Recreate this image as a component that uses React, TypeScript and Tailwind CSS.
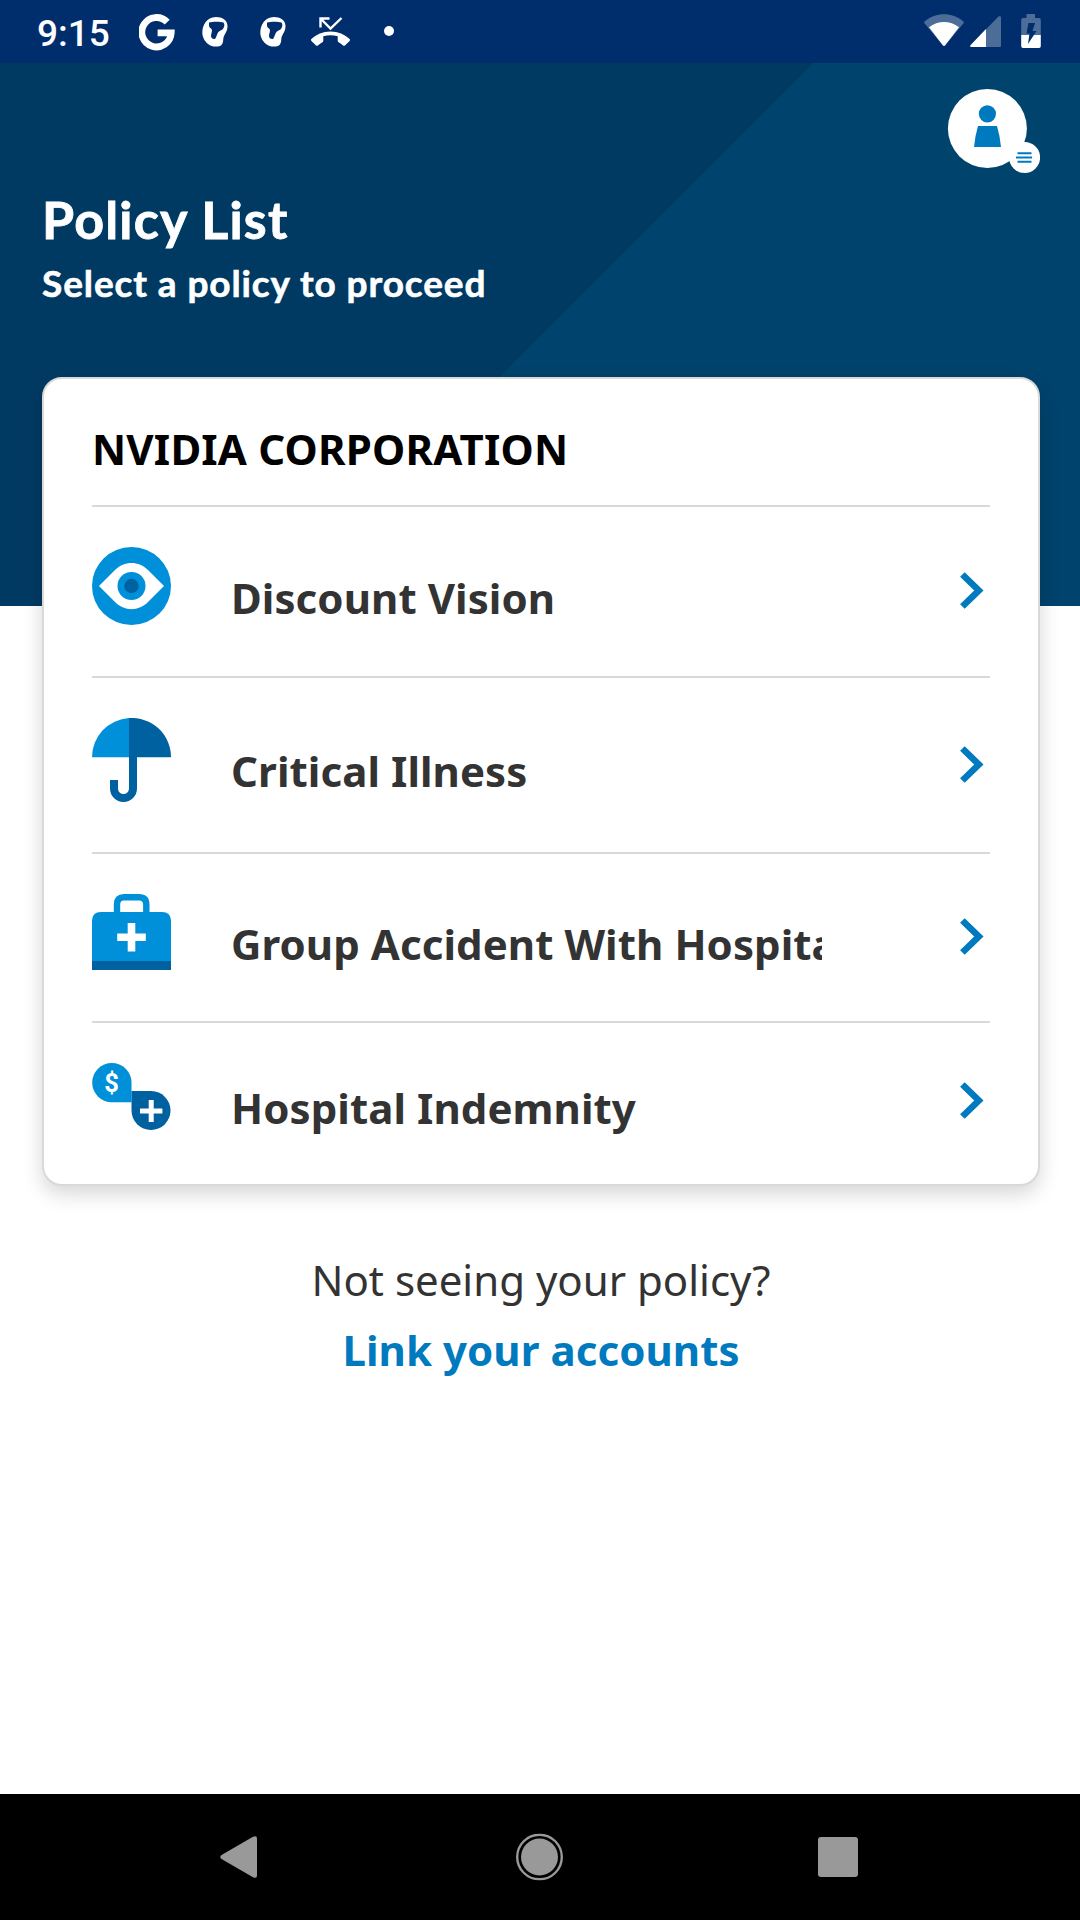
import React from "react";

const HeadGlyph = () => (
  <svg className="h-[30px] w-[26px]" viewBox="0 0 26 30">
    <path
      d="M14 0C20 0 25.500 3 25.500 9C25.500 14.500 22.500 17 21.500 20.500C21 23 21.500 26 19.500 28C17.500 30 12.500 30 9 28.700C5 27 1.500 23 .5 18C-.5 11 3 0 14 0Z"
      fill="#fff"
    />
    <path
      d="M7 5.500C11 4.500 18 4.500 21.500 5.500C23 7 22.500 10.500 20.500 12.500C18.500 13.500 16.500 14 15.500 16.500C14.500 18.500 14.500 20 13 22C11 22.500 9 21 9 19C9 16.500 10.500 14.500 9.800 12.500C9 11 7.500 11 7 9Z"
      fill="#002e6d"
    />
  </svg>
);

const StatusBar = () => (
  <div className="flex h-[63px] items-start bg-[#002e6d] pl-[37px] text-white">
    <span className="mt-[12px] w-[102px] font-[Roboto] text-[37px] leading-[43px] font-medium">9:15</span>
    <svg className="mt-[13.500px] h-[37px] w-[36px]" viewBox="0 0 36 37">
      <path
        d="M28.200 8.100A14.700 14.700 0 1 0 32.200 18.900H18.600"
        fill="none"
        stroke="#fff"
        strokeWidth="6.8"
      />
    </svg>
    <div className="mt-[17px] ml-[27px] flex gap-[32px]">
      <HeadGlyph />
      <HeadGlyph />
    </div>
    <svg className="mt-[17px] ml-[25px] h-[30px] w-[39px]" viewBox="0 0 39 30">
      <path d="M9.500 10.500V1.500H18.500M9.500 1.500L19.500 11.500L30.500 1" fill="none" stroke="#fff" strokeWidth="2.400" />
      <path
        d="M19.500 14.500C27 14.500 34 17.500 38.600 22C39.200 22.700 39.200 23.300 38.600 24L34.200 28.300C33.500 29 32.800 29 32.100 28.400C30.700 27.100 29.200 26 27.600 25.200C27 24.900 26.700 24.500 26.700 23.800V19.300C22 17.800 17 17.800 12.300 19.300V23.800C12.300 24.500 12 24.900 11.400 25.200C9.800 26 8.300 27.100 6.900 28.400C6.200 29 5.500 29 4.800 28.300L.4 24C-.2 23.300-.2 22.700 .4 22C5 17.500 12 14.500 19.500 14.500Z"
        fill="#fff"
      />
    </svg>
    <span className="mt-[26px] ml-[34px] size-[10px] rounded-full bg-white" />
    <svg className="mt-[14px] mr-[6px] ml-auto h-[33px] w-[40px]" viewBox="0 0 40 33">
      <path d="M.6 7.400C12 -2 28 -2 39.400 7.400C40 8 40 8.600 39.500 9.300L21.200 31.300C20.500 32.100 19.500 32.100 18.800 31.300L.5 9.300C0 8.600 0 8 .6 7.400Z" fill="#fff" fillOpacity=".3" />
      <path d="M5 13.300C14 6.300 26 6.300 35 13.300L21.200 31.300C20.500 32.100 19.500 32.100 18.800 31.300Z" fill="#fff" />
    </svg>
    <svg className="mt-[16px] h-[31px] w-[31px]" viewBox="0 0 31 31">
      <path d="M31 1.500V29.500Q31 31 29.500 31H1.500Q-.7 31 .7 29L28.500.6Q31-.6 31 1.500Z" fill="#fff" fillOpacity=".3" />
      <path d="M16 13V31H1.500Q-.7 31 .7 29Z" fill="#fff" />
    </svg>
    <svg className="mt-[14px] mr-[39px] ml-[20px] h-[34px] w-[20px]" viewBox="0 0 20 34">
      <path d="M5.500 0H14V4H18Q19.800 4 19.800 6V21H.2V6Q.2 4 2 4H5.500Z" fill="#fff" fillOpacity=".3" />
      <path d="M.2 21H19.800V32Q19.800 34 18 34H2Q.2 34 .2 32Z" fill="#fff" />
      <path d="M7.500 9H14L11.500 17H15.500L7 30L8.500 19.500H5.500Z" fill="#002e6d" />
    </svg>
  </div>
);

const Avatar = () => (
  <svg className="mt-[25px] mr-[40px] ml-auto block h-[86px] w-[93px]" viewBox="0 0 93 86">
    <circle cx="40.400" cy="40.500" r="39.500" fill="#fff" />
    <circle cx="40.400" cy="25.800" r="8.600" fill="#007abf" />
    <path d="M31 38H50Q53 48 54 59H27Q28 48 31 38Z" fill="#007abf" />
    <circle cx="77.600" cy="69.500" r="15.500" fill="#fff" />
    <path d="M70.500 65.200H84.500M69 69.500H85M70.500 73.800H84.500" stroke="#007abf" strokeWidth="2" />
  </svg>
);

const EyeIcon = () => (
  <svg className="h-[78px] w-[79px]" viewBox="0 0 79 78">
    <ellipse cx="39.500" cy="39" rx="39.500" ry="39" fill="#0090da" />
    <path d="M7 39L23 23C32 13.500 47 13.500 56 23L72 39L56 55C47 64.500 32 64.500 23 55Z" fill="#fff" />
    <circle cx="39.500" cy="39" r="14" fill="#0090da" />
    <circle cx="39.500" cy="39" r="7.200" fill="#0061a0" />
  </svg>
);

const UmbrellaIcon = () => (
  <svg className="mb-[-1px] h-[84px] w-[79px]" viewBox="0 0 79 84">
    <path d="M37 0V39.300H0A39.400 39.400 0 0 1 37 0Z" fill="#0090da" />
    <path d="M37 0C61 -1 79 17 79 39.300H37Z" fill="#0061a0" />
    <path d="M41 38V70.500A9.300 9.300 0 0 1 22 70.500V62" fill="none" stroke="#0061a0" strokeWidth="8" />
  </svg>
);

const BriefcaseIcon = () => (
  <svg className="h-[76px] w-[79px]" viewBox="0 0 79 76">
    <path d="M25 22V10.500Q25 3.200 32 3.200H47Q54.300 3.200 54.300 10.500V22" fill="none" stroke="#0090da" strokeWidth="6.400" />
    <path d="M0 67V27Q0 18 9 18H70Q79 18 79 27V67Z" fill="#0090da" />
    <path d="M0 67H79V76H0Z" fill="#0061a0" />
    <path d="M39.500 29V57.500M25.200 43.200H53.800" stroke="#fff" strokeWidth="7.600" />
  </svg>
);

const IndemnityIcon = () => (
  <svg className="mb-[-1px] h-[67px] w-[79px]" viewBox="0 0 79 67">
    <path d="M39.500 39.300H19.700A19.650 19.650 0 1 1 39.500 19.600Z" fill="#0090da" />
    <path d="M39.500 28H59.300A19.500 19.500 0 1 1 39.500 47.500Z" fill="#0061a0" />
    <text x="19.600" y="28.700" textAnchor="middle" fontFamily="Roboto" fontWeight="700" fontSize="25.500" fill="#fff">
      $
    </text>
    <path d="M59.200 37V59M48 48H70.400" stroke="#fff" strokeWidth="5" />
  </svg>
);

const Chevron = () => (
  <svg className="mr-[6px] ml-auto h-[38px] w-[24px] translate-y-[4.5px]" viewBox="0 0 24 38">
    <path d="M2.400 3L18.800 19L2.400 35" fill="none" stroke="#007abf" strokeWidth="6.600" />
  </svg>
);

const policies = [
  { name: "Discount Vision", Icon: EyeIcon, spacing: "pb-[51px]" },
  { name: "Critical Illness", Icon: UmbrellaIcon, spacing: "pb-[51px]" },
  { name: "Group Accident With Hospital", Icon: BriefcaseIcon, spacing: "pb-[51px]" },
  { name: "Hospital Indemnity", Icon: IndemnityIcon, spacing: "pb-[55px]" },
];

const NavBar = () => (
  <div className="mt-auto flex h-[126px] items-center bg-black pl-[220px]">
    <svg className="h-[42px] w-[37px]" viewBox="0 0 37 42">
      <path d="M1.500 19L33 .8Q37-1 37 2.500V39.500Q37 43 33 41.200L1.500 23Q-1 21 1.500 19Z" fill="#999" />
    </svg>
    <svg className="ml-[259px] h-[47px] w-[47px] -translate-y-[0.5px]" viewBox="0 0 47 47">
      <circle cx="23.500" cy="23.500" r="22.300" fill="none" stroke="#999" strokeWidth="2.400" />
      <circle cx="23.500" cy="23.500" r="18.500" fill="#999" />
    </svg>
    <span className="ml-[255px] size-[40px] rounded-[3px] bg-[#999]" />
  </div>
);

export default function App() {
  return (
    <div className="flex h-[1920px] w-[1080px] flex-col overflow-hidden bg-white font-['Noto_Sans',sans-serif]">
      <StatusBar />
      <header className="h-[543px] bg-[linear-gradient(135deg,#003a63_50.1%,#00436d_50.1%)] text-white">
        <Avatar />
        <div className="pl-[42px] font-[Lato,sans-serif] font-bold">
          <h1 className="mt-[12px] text-[52px] leading-[66px] tracking-[1.2px] [-webkit-text-stroke:0.8px_white]">
            Policy List
          </h1>
          <p className="mt-[9px] text-[37px] leading-[44px] tracking-[0.9px] [-webkit-text-stroke:0.6px_white]">
            Select a policy to proceed
          </p>
        </div>
      </header>
      <main className="mx-[42px] -mt-[229px] w-[998px] rounded-[20px] border-2 border-[#d9d9d6] bg-white px-[48px] shadow-[0_8px_20px_rgba(0,0,0,0.16)]">
        <h2 className="pt-[41px] pb-[28px] text-[42px] leading-[57px] font-bold tracking-[0.2px] text-black">
          NVIDIA CORPORATION
        </h2>
        {policies.map(({ name, Icon, spacing }) => (
          <div key={name} className={`flex items-center border-t-2 border-[#d9d9d6] pt-10 ${spacing}`}>
            <Icon />
            <span className="ml-[60px] w-[591px] translate-y-[11px] overflow-hidden text-[42px] leading-[57px] font-bold tracking-[0.07px] whitespace-nowrap text-[#333]">
              {name}
            </span>
            <Chevron />
          </div>
        ))}
      </main>
      <div className="mt-[65px] flex flex-col items-center pl-[2px] text-[42px] leading-[57px]">
        <p className="text-[#333]">Not seeing your policy?</p>
        <a className="mt-[13px] font-bold tracking-[0.05px] text-[#007abf]">Link your accounts</a>
      </div>
      <NavBar />
    </div>
  );
}
